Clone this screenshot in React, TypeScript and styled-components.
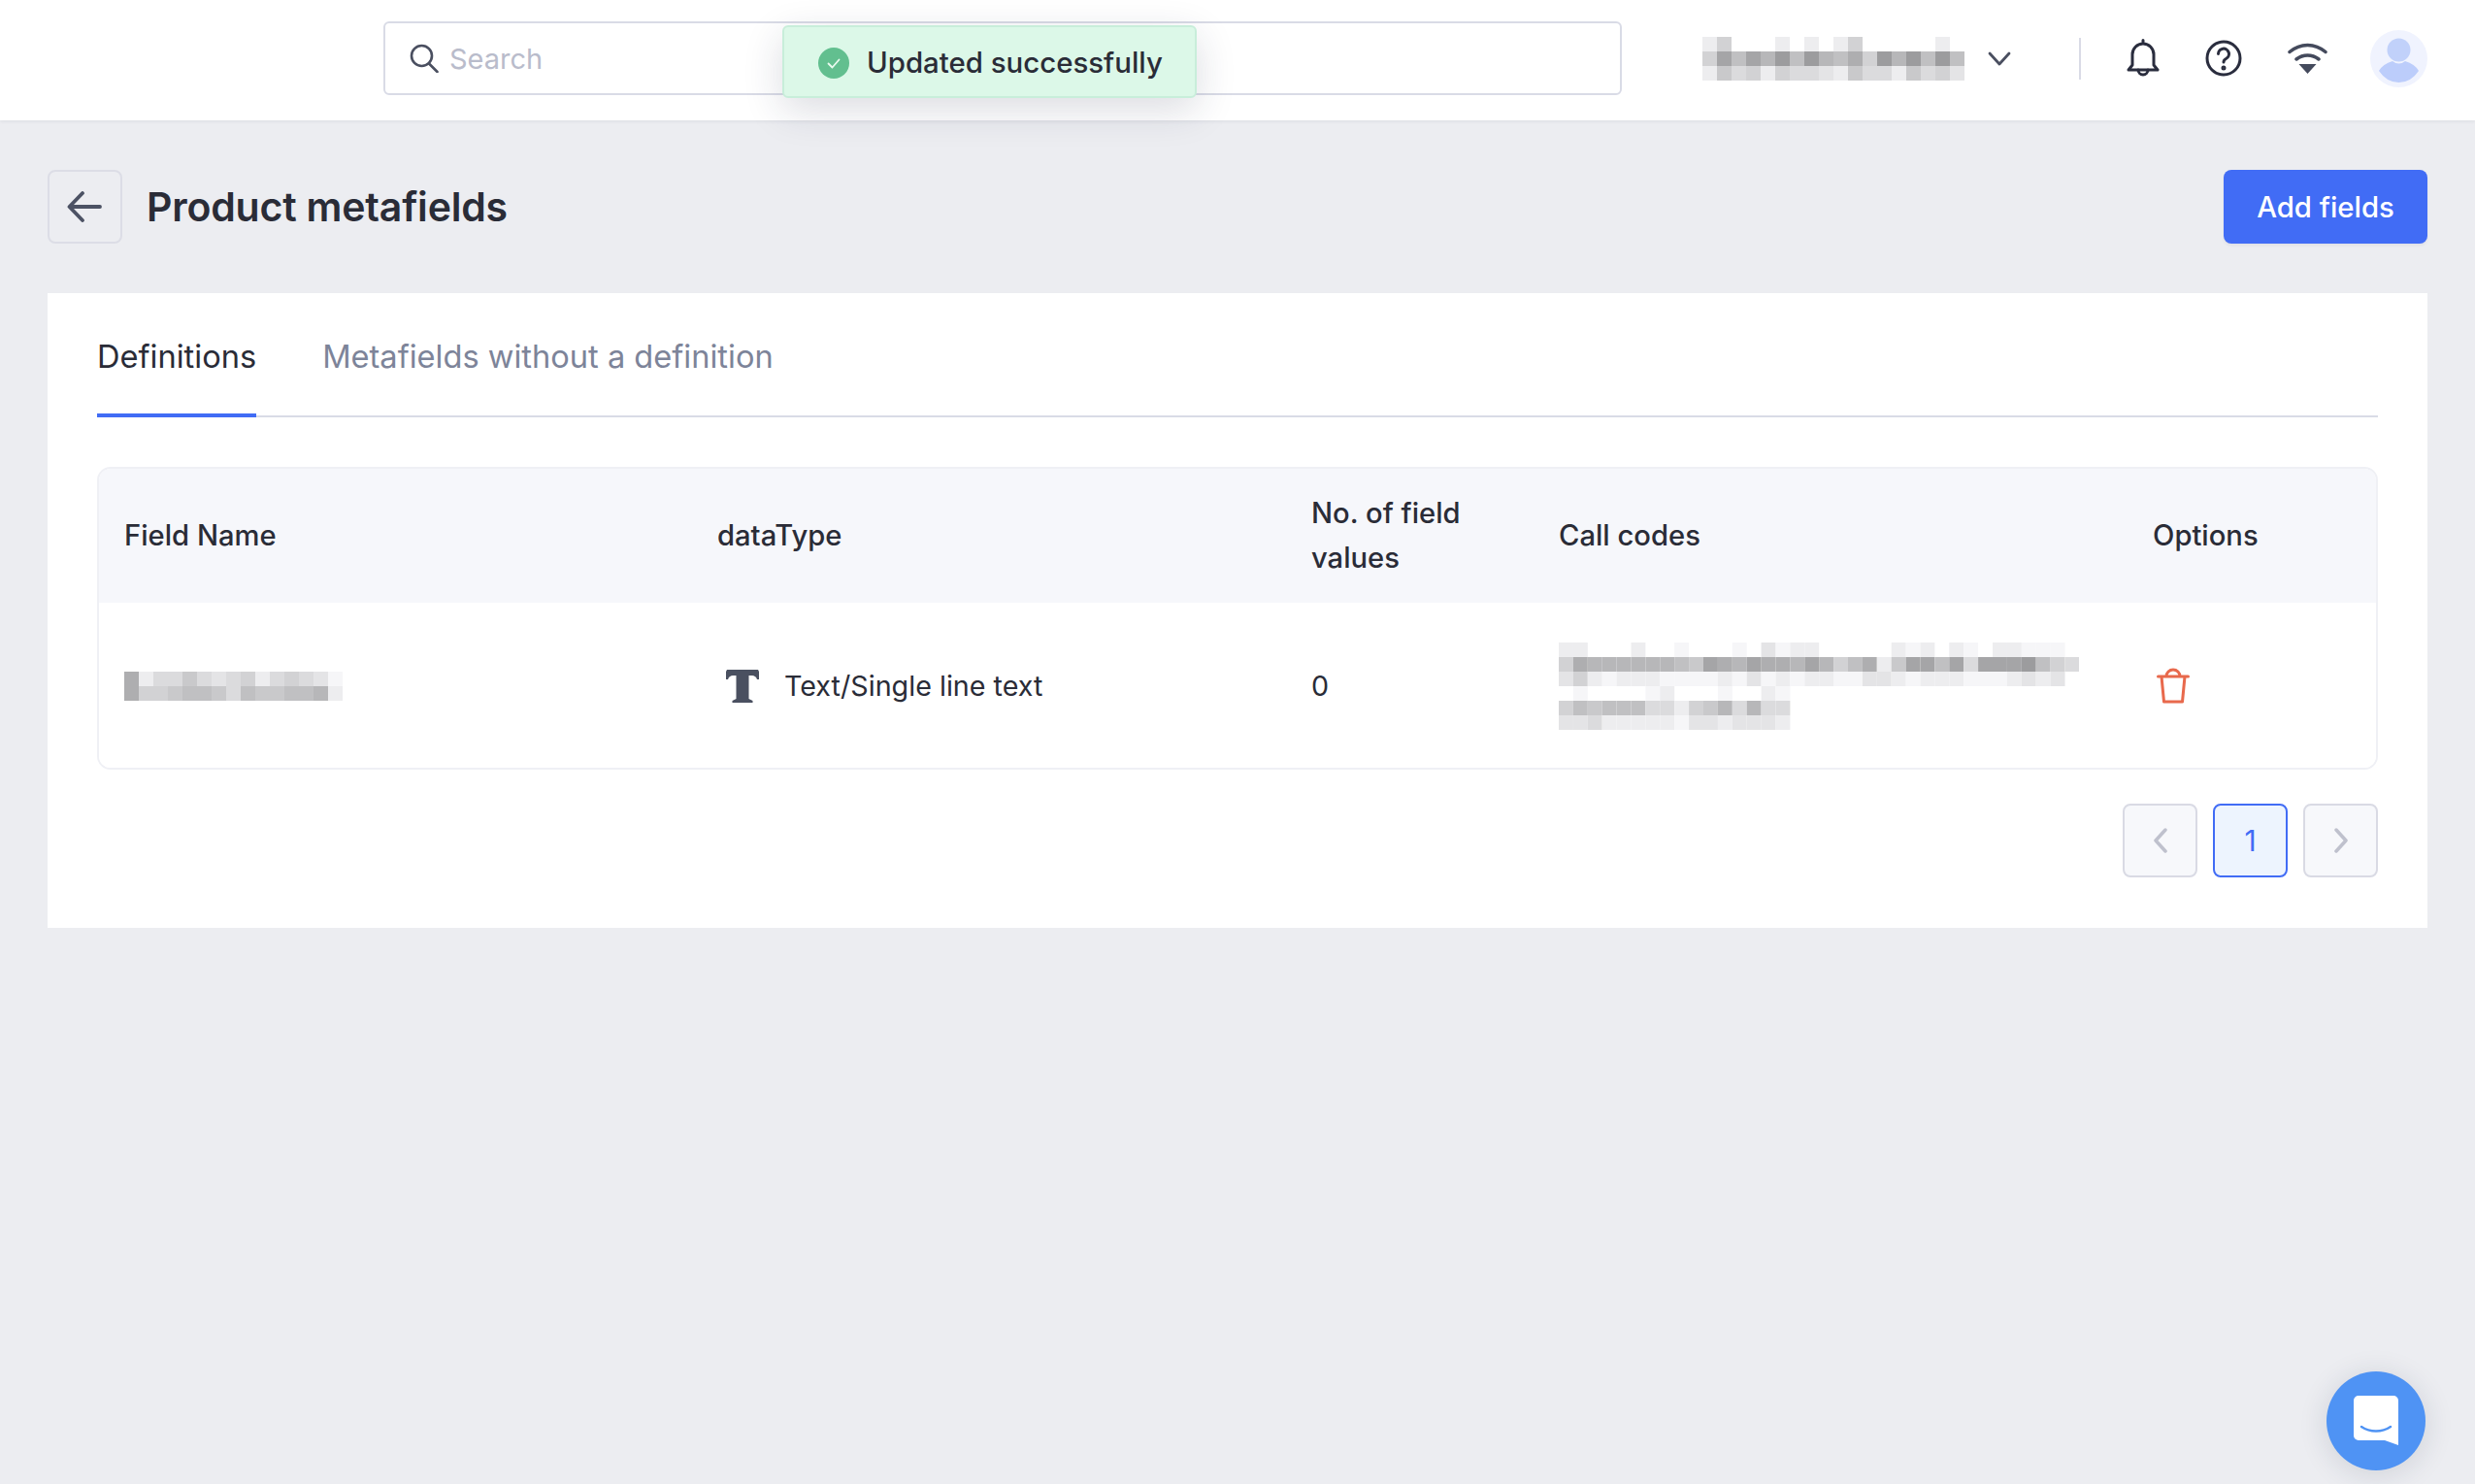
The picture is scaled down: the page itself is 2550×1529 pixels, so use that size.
import React from "react";
import styled, { createGlobalStyle } from "styled-components";

const Global = createGlobalStyle`
  html, body { margin: 0; padding: 0; }
  body { background: #ecedf1; font-family: Inter, "Liberation Sans", sans-serif; color: #2a2c37; }
  * { box-sizing: border-box; }
`;
const Page = styled.div`width: 2550px; height: 1529px; overflow: hidden; position: relative; background: #ecedf1;`;
const Header = styled.header`
  height: 124px; background: #fff; display: flex; align-items: center; padding: 0 49px 4px 395px;
  box-shadow: 0 1px 4px rgba(30, 40, 70, .08);
`;
const SearchBox = styled.div`
  flex: none; width: 1276px; height: 76px; border: 2px solid #d9dbe6; border-radius: 6px; display: flex; align-items: center;
  padding-left: 25px; gap: 11px; font-size: 29px; color: #b9bccb;
`;
const Account = styled.div`display: flex; align-items: center; margin-left: 83px; gap: 24px;`;
const Divider = styled.div`flex: none; width: 2px; height: 43px; background: #d9dbe6; margin: 0 47px 0 70px;`;
const HeaderIcons = styled.div`display: flex; align-items: center; gap: 47px; margin-right: 44px;`;
const AvatarIcon = styled.svg`flex: none;`;
const Toast = styled.div`
  position: absolute; left: 806px; top: 26px; width: 427px; height: 75px; background: #dcf8e8; border: 2px solid #c8eeda; border-radius: 6px;
  display: flex; align-items: center; padding: 2px 0 0 35px; gap: 18px; font-size: 29.4px; font-weight: 500; color: #2a2c37;
  box-shadow: 0 12px 40px rgba(30, 40, 70, .16);
`;
const TitleBar = styled.div`display: flex; align-items: center; padding: 51px 49px 51px; height: 178px;`;
const BackButton = styled.button`
  width: 77px; height: 76px; border: 2px solid #dcdde6; border-radius: 8px; background: transparent; display: flex; align-items: center; justify-content: center; padding: 0 2px 0 0;
`;
const Title = styled.h1`margin: 0 0 0 25px; font-size: 41px; font-weight: 600; color: #2a2c37; flex: 1; letter-spacing: -.2px;`;
const PrimaryButton = styled.button`
  width: 210px; height: 76px; background: #416cf5; border: 0; border-radius: 8px; color: #fff; font: 500 29.3px Inter, sans-serif;
  box-shadow: 0 2px 3px rgba(30, 40, 70, .06);
`;
const Card = styled.main`margin: 0 49px; height: 654px; background: #fff; padding: 0 51px;`;
const Tabs = styled.div`display: flex; gap: 68px; border-bottom: 2px solid #d9dbe6; height: 128px; margin-bottom: 51px;`;
const Tab = styled.div<{ $active?: boolean }>`
  font-size: 32.6px; height: 128px; padding-top: 41px; line-height: 48px; color: ${p => p.$active ? "#2a2c37" : "#7d8499"};
  border-bottom: ${p => p.$active ? "4px solid #416cf5" : "0"};
`;
const Table = styled.div`border: 2px solid #eff0f5; border-radius: 14px; overflow: hidden; height: 312px;`;
const Row = styled.div<{ $head?: boolean }>`
  display: grid; grid-template-columns: 611px 612px 255px 612px 1fr; height: ${p => p.$head ? "138px" : "170px"};
  background: ${p => p.$head ? "#f6f7fb" : "#fff"}; font-size: ${p => p.$head ? "29.2px" : "28.7px"}; line-height: 46px; font-weight: ${p => p.$head ? 500 : 400};
  padding-top: ${p => p.$head ? 0 : "1px"};
`;
const Cell = styled.div`padding: 0 26px; display: flex; align-items: center;`;
const TypeIcon = styled.svg`margin: 0 26px 0 9px; flex: none;`;
const TrashIcon = styled.svg`margin: -2px 0 0 4px; flex: none;`;
const Pager = styled.div`display: flex; justify-content: flex-end; gap: 16px; margin-top: 35px;`;
const PageBtn = styled.button<{ $active?: boolean }>`
  width: 77px; height: 76px; border-radius: 8px; padding: 0; display: flex; align-items: center; justify-content: center;
  border: 2px solid ${p => p.$active ? "#416cf5" : "#d9dae4"}; background: ${p => p.$active ? "#edf4fe" : "#f7f8fb"};
  color: #416cf5; font: 400 30px Inter, sans-serif;
`;
const Chat = styled.div`
  position: absolute; left: 2397px; top: 1413px; width: 102px; height: 102px; border-radius: 50%; background: #4f93f4; display: flex; align-items: center; justify-content: center;
  box-shadow: 0 4px 30px rgba(30, 40, 70, .14);
`;

type MosaicProps = { data: string[]; cell?: number };
const Mosaic = ({ data, cell = 15 }: MosaicProps) => (
  <svg width={Math.max(...data.map(r => r.length)) * cell} height={data.length * 15} style={{ display: "block", flex: "none" }}>
    {data.map((row, y) => row.split("").map((c, x) => {
      const n = parseInt(c, 16);
      if (!n) return null;
      const v = 255 - n * 9;
      return <rect key={x + "-" + y} x={x * cell} y={y * 15} width={cell} height={15} fill={`rgb(${v},${v},${v + 2})`} />;
    }))}
  </svg>
);

export default function App() {
  return (
    <Page>
      <Global />
      <Header>
        <SearchBox>
          <svg width="30" height="30" viewBox="0 0 30 30" fill="none" stroke="#4a4f60" strokeWidth="2.6" strokeLinecap="round"><circle cx="12.500" cy="12.500" r="10.500" /><path d="M20 20.500 28.500 29" /></svg>
          Search
        </SearchBox>
        <Account>
          <Mosaic data={["250002020250000020", "5A7A8B7B8795B8B7B7", "264525443264426453"]} />
          <svg width="24" height="15" viewBox="0 0 24 15" fill="none" stroke="#4a4f60" strokeWidth="2.800" strokeLinecap="round" strokeLinejoin="round"><path d="m2 2 10 11L22 2" /></svg>
        </Account>
        <Divider />
        <HeaderIcons>
          <svg width="34" height="40" viewBox="0 0 34 40" fill="none" stroke="#2a2d3e" strokeWidth="3" strokeLinecap="round" strokeLinejoin="round"><path d="M17 1.500v3M6 27V16a11 11 0 0 1 22 0v11l4 5H2z" /><path d="M12 32a5 5 0 0 0 10 0" /></svg>
          <svg width="38" height="38" viewBox="0 0 38 38" fill="none" stroke="#2a2d3e" strokeWidth="3" strokeLinecap="round"><circle cx="19" cy="19" r="17" /><path d="M13.500 14.500a5.500 5.500 0 1 1 8 5c-1.800 1-2.500 2-2.500 3.500" /><circle cx="19" cy="29" r="1" fill="#2a2d3e" /></svg>
          <svg width="41" height="32" viewBox="0 0 41 32" fill="none" stroke="#444a5c" strokeWidth="3.500" strokeLinecap="round"><path d="M2 9.500c11-9.500 26-9.500 37 0M9 17c7-5.500 16-5.500 23 0" /><path d="M11.500 22h18l-9 10z" fill="#444a5c" stroke="none" /></svg>
        </HeaderIcons>
        <AvatarIcon width="59" height="59" viewBox="0 0 59 59"><circle cx="29.500" cy="29.500" r="29.500" fill="#f0f3fe" /><circle cx="29.500" cy="20.500" r="12" fill="#c1d1fa" /><path d="M9 42q4-7 14-10 6.500 5 13 0 10 3 14 10-8 12-20.500 12T9 42z" fill="#bccdfb" /></AvatarIcon>
      </Header>
      <Toast>
        <svg width="32" height="32" viewBox="0 0 32 32"><circle cx="16" cy="16" r="16" fill="#62bf8f" /><path d="m10.500 16.500 4 4 7-8" fill="none" stroke="#eafaf0" strokeWidth="1.800" strokeLinecap="round" strokeLinejoin="round" /></svg>
        Updated successfully
      </Toast>
      <TitleBar>
        <BackButton aria-label="Back">
          <svg width="36" height="32" viewBox="0 0 36 32" fill="none" stroke="#4c5264" strokeWidth="3.800" strokeLinecap="round" strokeLinejoin="round"><path d="M34 16H3M16 2 2.500 16 16 30" /></svg>
        </BackButton>
        <Title>Product metafields</Title>
        <PrimaryButton>Add fields</PrimaryButton>
      </TitleBar>
      <Card>
        <Tabs>
          <Tab $active>Definitions</Tab>
          <Tab>Metafields without a definition</Tab>
        </Tabs>
        <Table>
          <Row $head>
            <Cell>Field Name</Cell><Cell>dataType</Cell><Cell>No. of field values</Cell><Cell>Call codes</Cell><Cell>Options</Cell>
          </Row>
          <Row>
            <Cell><Mosaic data={["924464345245431", "955677647667782"]} /></Cell>
            <Cell>
              <TypeIcon width="34" height="34" viewBox="0 0 34 34" fill="#4a5060"><path d="M1 0H33L34 2V10H32C31 7 29 6 27 6H23.500V30L27.500 32V34H6.500V32L10.500 30V6H7C5 6 3 7 2 10H0V2Z" /></TypeIcon>
              Text/Single line text
            </Cell>
            <Cell>0</Cell>
            <Cell><Mosaic cell={14.9} data={[
              "22000200100010312200000212021022111",
              "598888887 6A98A998A8579 26AA7A4AAAB7 54".replace(/ /g, ""),
              "35212221111213121221133212221112323",
              "0100001200010021",
              "5767774425684844",
              "3342222213323332",
            ]} /></Cell>
            <Cell>
              <TrashIcon width="34" height="38" viewBox="0 0 34 38" fill="none" stroke="#e8694c" strokeWidth="3" strokeLinecap="round" strokeLinejoin="round"><path d="M1.500 10h31M10 10a7 7 0 0 1 14 0M5 10l2.500 26h19L29 10" /></TrashIcon>
            </Cell>
          </Row>
        </Table>
        <Pager>
          <PageBtn aria-label="Previous"><svg width="16" height="26" viewBox="0 0 16 26" fill="none" stroke="#bfc1cd" strokeWidth="3.500" strokeLinecap="round" strokeLinejoin="round"><path d="M13 2 3 13l10 11" /></svg></PageBtn>
          <PageBtn $active>1</PageBtn>
          <PageBtn aria-label="Next"><svg width="16" height="26" viewBox="0 0 16 26" fill="none" stroke="#bfc1cd" strokeWidth="3.500" strokeLinecap="round" strokeLinejoin="round"><path d="m3 2 10 11L3 24" /></svg></PageBtn>
        </Pager>
      </Card>
      <Chat>
        <svg width="46" height="52" viewBox="0 0 46 52"><path d="M5 0h36a5 5 0 0 1 5 5v46l-14-5H5a5 5 0 0 1-5-5V5a5 5 0 0 1 5-5z" fill="#fff" /><path d="M8 32c9 6 21 6 30 0" fill="none" stroke="#4f93f4" strokeWidth="2.500" strokeLinecap="round" /></svg>
      </Chat>
    </Page>
  );
}
